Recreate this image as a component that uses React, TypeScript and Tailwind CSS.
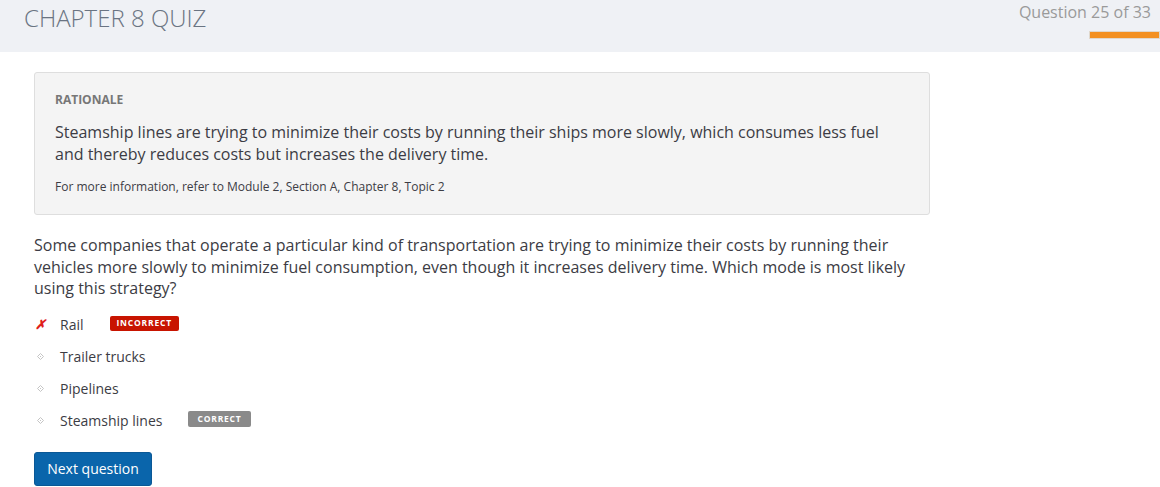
import React from "react";

const options = [
  { label: "Rail", mark: "x", badge: "INCORRECT" },
  { label: "Trailer trucks", mark: "dot" },
  { label: "Pipelines", mark: "dot" },
  { label: "Steamship lines", mark: "dot", badge: "CORRECT" },
];

export default function App() {
  return (
    <div className="min-h-[487px] w-[1160px] bg-white text-[#444] font-['Open_Sans',sans-serif]">
      <header className="h-[52px] bg-[#eff1f5] flex justify-between">
        <h1 className="pl-[24px] pt-[1px] text-[24px] font-light text-[#6a7482] leading-[34px]">
          CHAPTER 8 QUIZ
        </h1>
        <div className="flex flex-col items-end pt-[1px]">
          <div className="pr-[9px] text-[16px] leading-[22px] text-[#9a9a9a]">Question 25 of 33</div>
          <div className="mt-[8px] h-[8px] w-[71px] bg-[#f39020] border border-[#e0d8cc]" />
        </div>
      </header>

      <main className="pl-[34px] pt-[20px] w-[930px]">
        <section className="rounded-[3px] border border-[#dedede] bg-[#f4f4f4] pl-[20px] pr-[20px] pt-[18px] pb-[18px]">
          <div className="text-[12px] font-bold text-[#777] leading-[18px]">RATIONALE</div>
          <p className="mt-[12px] text-[16px] leading-[22px] text-[#3c3c44]">
            Steamship lines are trying to minimize their costs by running their ships more slowly, which consumes less fuel
            and thereby reduces costs but increases the delivery time.
          </p>
          <p className="mt-[13px] text-[12px] leading-[18px] text-[#3c3c44]">
            For more information, refer to Module 2, Section A, Chapter 8, Topic 2
          </p>
        </section>

        <p className="mt-[20px] text-[16px] leading-[21.5px] text-[#3c3c44]">
          Some companies that operate a particular kind of transportation are trying to minimize their costs by running their
          vehicles more slowly to minimize fuel consumption, even though it increases delivery time. Which mode is most likely
          using this strategy?
        </p>

        <ul className="mt-[14px] flex flex-col gap-[10px]">
          {options.map((o) => (
            <li key={o.label} className="flex items-center h-[22px] text-[14px] text-[#3c3c44]">
              <span className="w-[26px] flex justify-start pl-[1px]">
                {o.mark === "x" ? (
                  <span className="text-[#e0201a] font-bold text-[13px] italic leading-none">✗</span>
                ) : (
                  <svg width="7" height="7" viewBox="0 0 7 7" className="ml-[2px]">
                    <path d="M3.5 0.5 L6.5 3.5 L3.5 6.5 L0.5 3.5 Z" fill="none" stroke="#c4c4c4" strokeWidth="1" />
                    <rect x="3" y="3" width="1" height="1" fill="#c4c4c4" />
                  </svg>
                )}
              </span>
              <span>{o.label}</span>
              {o.badge === "INCORRECT" && (
                <span className="ml-[26px] mb-[3px] rounded-[2px] bg-[#c81400] px-[7px] h-[15px] flex items-center text-[8.5px] font-bold tracking-[0.8px] text-white">
                  INCORRECT
                </span>
              )}
              {o.badge === "CORRECT" && (
                <span className="ml-[26px] mb-[3px] rounded-[2px] bg-[#8a8a8a] px-[9px] h-[16px] flex items-center text-[8.5px] font-bold tracking-[0.8px] text-white">
                  CORRECT
                </span>
              )}
            </li>
          ))}
        </ul>

        <button className="mt-[20px] h-[34px] w-[118px] rounded-[3px] bg-[#0a65ab] border border-[#0a5896] text-white text-[14px] font-medium">
          Next question
        </button>
      </main>
    </div>
  );
}
